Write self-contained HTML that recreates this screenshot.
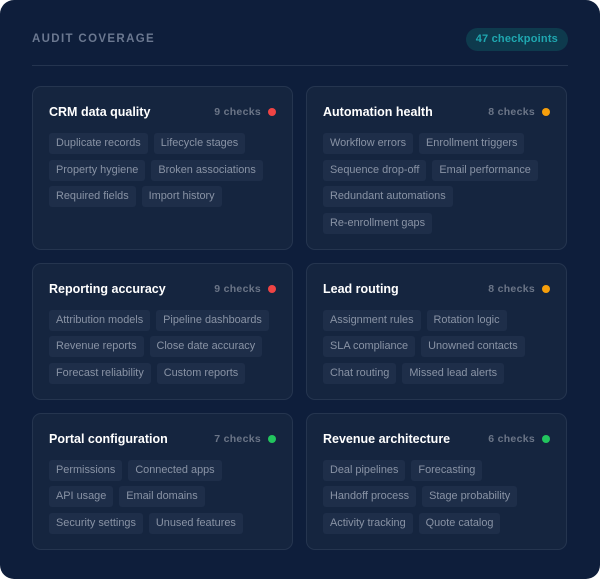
<!DOCTYPE html>
<html><head><style>
*{margin:0;padding:0;box-sizing:border-box}
body{width:600px;height:579px;background:#fff;font-family:"Liberation Sans",sans-serif;overflow:hidden}
.panel{position:absolute;left:0;top:0;width:600px;height:579px;background:#0e1e3b;border-radius:14px;padding:0 32px}
.hdr{height:66px;border-bottom:1px solid #24344f;position:relative}
.ttl{position:absolute;left:0;top:33px;font-size:11.5px;font-weight:bold;letter-spacing:1.35px;color:#6b7890}
.pill{position:absolute;right:0;top:28px;height:23px;padding:0 10px;border-radius:12px;background:#0e3a4d;color:#1fa7b0;font-size:11px;font-weight:bold;line-height:23px;letter-spacing:.2px}
.grid{display:grid;grid-template-columns:261px 261px;column-gap:13px;row-gap:13px;margin-top:20px}
.card{background:#15253f;border:1px solid #25354f;border-radius:9px;padding:16px 16px 15px 16px}
.top{display:flex;justify-content:space-between;align-items:center;height:18px;margin-bottom:12px}
.top b{color:#fff;font-size:12.5px}
.cnt{color:#6b7587;font-size:10.5px;font-weight:bold;letter-spacing:.3px;display:flex;align-items:center}
.dot{width:8px;height:8px;border-radius:50%;margin-left:7px}
.tags{display:flex;flex-wrap:wrap;gap:5.5px 6px}
.tags span{height:21px;line-height:21px;padding:0 7px;background:#1e2e49;border-radius:3px;color:#8993a5;font-size:10.9px}
</style></head><body>
<div class="panel">
<div class="hdr"><div class="ttl">AUDIT COVERAGE</div><div class="pill">47 checkpoints</div></div>
<div class="grid">
<div class="card"><div class="top"><b>CRM data quality</b><span class="cnt">9 checks<i class="dot" style="background:#ef4444"></i></span></div>
<div class="tags"><span>Duplicate records</span><span>Lifecycle stages</span><span>Property hygiene</span><span>Broken associations</span><span>Required fields</span><span>Import history</span></div></div>
<div class="card"><div class="top"><b>Automation health</b><span class="cnt">8 checks<i class="dot" style="background:#f59e0b"></i></span></div>
<div class="tags"><span>Workflow errors</span><span>Enrollment triggers</span><span>Sequence drop-off</span><span>Email performance</span><span>Redundant automations</span><span>Re-enrollment gaps</span></div></div>
<div class="card"><div class="top"><b>Reporting accuracy</b><span class="cnt">9 checks<i class="dot" style="background:#ef4444"></i></span></div>
<div class="tags"><span>Attribution models</span><span>Pipeline dashboards</span><span>Revenue reports</span><span>Close date accuracy</span><span>Forecast reliability</span><span>Custom reports</span></div></div>
<div class="card"><div class="top"><b>Lead routing</b><span class="cnt">8 checks<i class="dot" style="background:#f59e0b"></i></span></div>
<div class="tags"><span>Assignment rules</span><span>Rotation logic</span><span>SLA compliance</span><span>Unowned contacts</span><span>Chat routing</span><span>Missed lead alerts</span></div></div>
<div class="card"><div class="top"><b>Portal configuration</b><span class="cnt">7 checks<i class="dot" style="background:#22c55e"></i></span></div>
<div class="tags"><span>Permissions</span><span>Connected apps</span><span>API usage</span><span>Email domains</span><span>Security settings</span><span>Unused features</span></div></div>
<div class="card"><div class="top"><b>Revenue architecture</b><span class="cnt">6 checks<i class="dot" style="background:#22c55e"></i></span></div>
<div class="tags"><span>Deal pipelines</span><span>Forecasting</span><span>Handoff process</span><span>Stage probability</span><span>Activity tracking</span><span>Quote catalog</span></div></div>
</div></div>
</body></html>
